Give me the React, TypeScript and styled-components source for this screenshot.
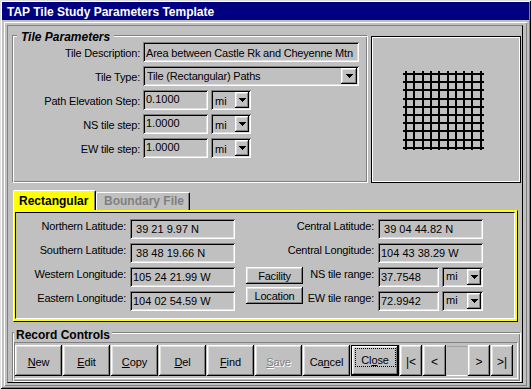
import React from "react";
import styled, { createGlobalStyle } from "styled-components";

const GlobalStyle = createGlobalStyle`
  html, body { margin: 0; padding: 0; background: #c0c0c0; }
  body { font-family: "Liberation Sans", Arial, sans-serif; font-size: 11px; color: #000; }
  *, *::before, *::after { box-sizing: border-box; }
`;

const sunken = `box-shadow: inset 1px 1px #808080, inset -1px -1px #fff, inset 2px 2px #000, inset -2px -2px #dfdfdf;`;
const raised = `box-shadow: inset -1px -1px #000, inset 1px 1px #fff, inset -2px -2px #808080, inset 2px 2px #dfdfdf;`;

const Window = styled.div`
  width: 531px;
  height: 389px;
  background: #c0c0c0;
  padding: 2px;
  display: flex;
  flex-direction: column;
  overflow: hidden;
  box-shadow: inset 1px 1px #dfdfdf, inset -1px -1px #000, inset 2px 2px #fff, inset -2px -2px #808080;
`;

const TitleBar = styled.div`
  flex: none;
  height: 18px;
  background: #000080;
  color: #fff;
  font-weight: bold;
  font-size: 12px;
  line-height: 16px;
  padding: 2px 0 0 5px;
  white-space: nowrap;
`;

const Client = styled.div`
  flex: 1;
  margin: 2px 2px 1px 2px;
  padding: 3px 4px 3px 3px;
  display: flex;
  flex-direction: column;
  box-shadow: inset 1px 1px #fff, inset -1px -1px #808080;
`;

const Frame = styled.div`
  flex: 1;
  border: 1px solid;
  border-color: #808080 #000 #000 #808080;
  display: flex;
  flex-direction: column;
`;

const TopRow = styled.div`
  display: flex;
  gap: 3px;
  height: 148px;
  margin: 9px 1px 0 4px;
`;

const Group = styled.div<{ $w: number; $h?: number; $pad: string }>`
  position: relative;
  width: ${(p) => p.$w}px;
  ${(p) => (p.$h ? `height: ${p.$h}px;` : "")}
  padding: ${(p) => p.$pad};
  border: 1px solid;
  border-color: #808080 #fff #fff #808080;
  box-shadow: inset 1px 1px #fff, inset -1px -1px #808080;
`;

const Legend = styled.span<{ $left: number; $italic?: boolean; $pad: string }>`
  position: absolute;
  top: ${(p) => (p.$italic ? -6 : -5)}px;
  left: ${(p) => p.$left}px;
  padding: ${(p) => p.$pad};
  background: #c0c0c0;
  font-weight: bold;
  font-style: ${(p) => (p.$italic ? "italic" : "normal")};
  font-size: 12px;
  line-height: 14px;
  white-space: nowrap;
`;

const FormGrid = styled.div`
  display: grid;
  grid-template-columns: 127px 1fr;
  grid-auto-rows: 20px;
  column-gap: 3px;
  row-gap: 4px;
`;

const Label = styled.div`
  height: 20px;
  text-align: right;
  line-height: 22px;
  letter-spacing: -0.2px;
  white-space: nowrap;
`;

const TextBox = styled.div<{ $w: number; $lh: number; $tight?: boolean }>`
  width: ${(p) => p.$w}px;
  height: 20px;
  background: #c0c0c0;
  padding-left: 3px;
  line-height: ${(p) => p.$lh}px;
  white-space: pre;
  overflow: hidden;
  letter-spacing: ${(p) => (p.$tight ? "-0.2px" : "0")};
  ${sunken}
`;

const Pair = styled.div`
  display: flex;
  gap: 3px;
`;

const Combo = styled.div<{ $w: number }>`
  width: ${(p) => p.$w}px;
  height: 20px;
  display: flex;
  align-items: flex-start;
  padding: 2px;
  ${sunken}
`;

const ComboText = styled.div<{ $lh: number; $tight?: boolean }>`
  flex: 1;
  height: 16px;
  padding-left: 2px;
  margin-top: -2px;
  line-height: ${(p) => p.$lh}px;
  white-space: nowrap;
  overflow: hidden;
  letter-spacing: ${(p) => (p.$tight ? "-0.2px" : "0")};
`;

const DropButton = styled.div<{ $w: number }>`
  flex: none;
  width: ${(p) => p.$w}px;
  height: 16px;
  display: flex;
  align-items: center;
  justify-content: center;
  background: #c0c0c0;
  ${raised}
`;

const Arrow = () => (
  <svg width="7" height="4" viewBox="0 0 7 4" shapeRendering="crispEdges">
    <rect x="0" y="0" width="7" height="1" fill="#000" />
    <rect x="1" y="1" width="5" height="1" fill="#000" />
    <rect x="2" y="2" width="3" height="1" fill="#000" />
    <rect x="3" y="3" width="1" height="1" fill="#000" />
  </svg>
);

const Preview = styled.div`
  flex: 1;
  margin-top: 1px;
  border: 1px solid #000;
  box-shadow: inset 0 0 0 1px #fff;
  display: flex;
  align-items: center;
  justify-content: center;
  padding: 2px 5px 0 0;
`;

const TileGrid = () => {
  const xs = Array.from({ length: 10 }, (_, i) => 2 + Math.round(i * 8.3));
  const ys = Array.from({ length: 10 }, (_, i) => 2 + Math.round(i * 8.2));
  return (
    <svg width="81" height="79" viewBox="0 0 81 79" shapeRendering="crispEdges">
      {xs.map((x) => (
        <rect key={"v" + x} x={x} y={0} width={2} height={79} fill="#000" />
      ))}
      {ys.map((y) => (
        <rect key={"h" + y} x={0} y={y} width={81} height={2} fill="#000" />
      ))}
    </svg>
  );
};

const TabArea = styled.div`
  width: 505px;
  margin: 7px 0 0 5px;
  display: flex;
  flex-direction: column;
`;

const TabStrip = styled.div`
  display: flex;
  align-items: flex-end;
  height: 20px;
`;

const Tab = styled.div<{ $active?: boolean; $w: number }>`
  width: ${(p) => p.$w}px;
  height: ${(p) => (p.$active ? 20 : 18)}px;
  background: ${(p) => (p.$active ? "#ffff00" : "#c0c0c0")};
  color: ${(p) => (p.$active ? "#000" : "#808080")};
  font-weight: bold;
  font-size: 12px;
  line-height: ${(p) => (p.$active ? 20 : 16)}px;
  padding-left: ${(p) => (p.$active ? 5 : 7)}px;
  border-top: 1px solid #fff;
  border-left: 1px solid #fff;
  border-right: 1px solid #000;
  border-top-left-radius: 2px;
  border-top-right-radius: 2px;
  box-shadow: inset -1px 0 #808080;
  white-space: nowrap;
`;

const TabPanel = styled.div`
  height: 112px;
  border: 1px solid;
  border-color: #ffff00 #000 #000 #fff;
  background: #ffff00;
  padding: 1px 2px 2px 1px;
`;

const TabInner = styled.div`
  height: 100%;
  background: #c0c0c0;
  border: 1px solid;
  border-color: #000 #fff #fff #000;
  padding-top: 6px;
`;

const RectGrid = styled.div`
  display: grid;
  grid-template-columns: 114px 105px 11px 57px 75px 105px;
  grid-template-rows: repeat(4, 20px);
  row-gap: 4px;
`;

const RLabel = styled.div<{ $col: string; $row: number }>`
  grid-column: ${(p) => p.$col};
  grid-row: ${(p) => p.$row};
  text-align: right;
  padding-right: 4px;
  line-height: 14px;
  letter-spacing: -0.2px;
  white-space: nowrap;
`;

const Cell = styled.div<{ $col: number; $row: number }>`
  grid-column: ${(p) => p.$col};
  grid-row: ${(p) => p.$row};
`;

const ButtonStack = styled.div`
  grid-column: 4;
  grid-row: 3 / 5;
  display: flex;
  flex-direction: column;
  gap: 3px;
`;

const SmallButton = styled.button`
  width: 57px;
  height: 17px;
  border: none;
  padding: 0;
  background: #c0c0c0;
  font-family: inherit;
  font-size: 11px;
  letter-spacing: -0.2px;
  color: #000;
  ${raised}
`;

const RecordGroup = styled(Group)`
  margin: 10px 0 0 4px;
`;

const ButtonBar = styled.div`
  height: 37px;
  display: flex;
  gap: 1px;
  padding: 2px 0 0 0;
  border: 1px solid;
  border-color: #808080 #fff #fff #808080;
`;

const Btn = styled.button<{ $w: number; $default?: boolean; $disabled?: boolean; $nav?: boolean }>`
  flex: none;
  width: ${(p) => p.$w}px;
  height: 31px;
  padding: 2px 0 0 0;
  display: flex;
  align-items: ${(p) => (p.$default ? "flex-start" : "center")};
  justify-content: center;
  background: #c0c0c0;
  font-family: inherit;
  font-size: ${(p) => (p.$nav ? 12 : 11)}px;
  color: ${(p) => (p.$disabled ? "#808080" : "#000")};
  text-shadow: ${(p) => (p.$disabled ? "1px 1px #fff" : "none")};
  border: ${(p) => (p.$default ? "1px solid #000" : "none")};
  letter-spacing: -0.1px;
  ${raised}
`;

const FocusRect = styled.span`
  display: block;
  width: 41px;
  height: 19px;
  border: 1px dotted #000;
  padding-top: 5px;
  text-align: center;
  line-height: 13px;
`;

const NavBlank = styled.div`
  flex: none;
  width: 20px;
  height: 30px;
  margin-top: 1px;
  border-top: 1px solid #a0a0a0;
  border-bottom: 1px solid #fff;
`;

type RowDef = { label: string; value: string; unit?: boolean };

const tileRows: RowDef[] = [
  { label: "Path Elevation Step:", value: "0.1000", unit: true },
  { label: "NS tile step:", value: "1.0000", unit: true },
  { label: "EW tile step:", value: "1.0000", unit: true },
];

const leftRect: RowDef[] = [
  { label: "Northern Latitude:", value: " 39 21 9.97 N" },
  { label: "Southern Latitude:", value: " 38 48 19.66 N" },
  { label: "Western Longitude:", value: "105 24 21.99 W" },
  { label: "Eastern Longitude:", value: "104 02 54.59 W" },
];

const rightRect: RowDef[] = [
  { label: "Central Latitude:", value: " 39 04 44.82 N" },
  { label: "Central Longitude:", value: "104 43 38.29 W" },
  { label: "NS tile range:", value: "37.7548", unit: true },
  { label: "EW tile range:", value: "72.9942", unit: true },
];

const UnitCombo = ({ w, lh }: { w: number; lh: number }) => (
  <Combo $w={w}>
    <ComboText $lh={lh}>mi</ComboText>
    <DropButton $w={14}>
      <Arrow />
    </DropButton>
  </Combo>
);

export default function App() {
  return (
    <>
      <GlobalStyle />
      <Window>
        <TitleBar>TAP Tile Study Parameters Template</TitleBar>
        <Client>
          <Frame>
            <TopRow>
              <Group $w={356} $pad="6px 0 0 0">
                <Legend $left={4} $italic $pad="0 4px">
                  Tile Parameters
                </Legend>
                <FormGrid>
                  <Label>Tile Description:</Label>
                  <TextBox $w={216} $lh={22} $tight>
                    Area between Castle Rk and Cheyenne Mtn
                  </TextBox>
                  <Label>Tile Type:</Label>
                  <Combo $w={216}>
                    <ComboText $lh={20} $tight>
                      Tile (Rectangular) Paths
                    </ComboText>
                    <DropButton $w={16}>
                      <Arrow />
                    </DropButton>
                  </Combo>
                  {tileRows.map((r) => (
                    <React.Fragment key={r.label}>
                      <Label>{r.label}</Label>
                      <Pair>
                        <TextBox $w={65} $lh={19}>
                          {r.value}
                        </TextBox>
                        <UnitCombo w={40} lh={22} />
                      </Pair>
                    </React.Fragment>
                  ))}
                </FormGrid>
              </Group>
              <Preview>
                <TileGrid />
              </Preview>
            </TopRow>

            <TabArea>
              <TabStrip>
                <Tab $active $w={83}>
                  Rectangular
                </Tab>
                <Tab $w={94}>Boundary File</Tab>
              </TabStrip>
              <TabPanel>
                <TabInner>
                  <RectGrid>
                    {leftRect.map((r, i) => (
                      <React.Fragment key={r.label}>
                        <RLabel $col="1" $row={i + 1}>
                          {r.label}
                        </RLabel>
                        <Cell $col={2} $row={i + 1}>
                          <TextBox $w={105} $lh={20}>
                            {r.value}
                          </TextBox>
                        </Cell>
                      </React.Fragment>
                    ))}
                    <ButtonStack>
                      <SmallButton>Facility</SmallButton>
                      <SmallButton>Location</SmallButton>
                    </ButtonStack>
                    {rightRect.map((r, i) => (
                      <React.Fragment key={r.label}>
                        <RLabel $col={i < 2 ? "3 / 6" : "5"} $row={i + 1}>
                          {r.label}
                        </RLabel>
                        <Cell $col={6} $row={i + 1}>
                          {r.unit ? (
                            <Pair>
                              <TextBox $w={61} $lh={20}>
                                {r.value}
                              </TextBox>
                              <UnitCombo w={41} lh={19} />
                            </Pair>
                          ) : (
                            <TextBox $w={105} $lh={20}>
                              {r.value}
                            </TextBox>
                          )}
                        </Cell>
                      </React.Fragment>
                    ))}
                  </RectGrid>
                </TabInner>
              </TabPanel>
            </TabArea>

            <RecordGroup $w={509} $h={50} $pad="9px 2px 2px 1px">
              <Legend $left={1} $pad="0 2px">
                Record Controls
              </Legend>
              <ButtonBar>
                <Btn $w={47}>
                  <span><u>N</u>ew</span>
                </Btn>
                <Btn $w={47}>
                  <span><u>E</u>dit</span>
                </Btn>
                <Btn $w={47}>
                  <span><u>C</u>opy</span>
                </Btn>
                <Btn $w={47}>
                  <span><u>D</u>el</span>
                </Btn>
                <Btn $w={47}>
                  <span><u>F</u>ind</span>
                </Btn>
                <Btn $w={47} $disabled>
                  <span><u>S</u>ave</span>
                </Btn>
                <Btn $w={47}>
                  <span>Ca<u>n</u>cel</span>
                </Btn>
                <Btn $w={48} $default>
                  <FocusRect>
                    Cl<u>o</u>se
                  </FocusRect>
                </Btn>
                <Btn $w={22} $nav>|&lt;</Btn>
                <Btn $w={23} $nav>&lt;</Btn>
                <NavBlank />
                <Btn $w={22} $nav>&gt;</Btn>
                <Btn $w={22} $nav>&gt;|</Btn>
              </ButtonBar>
            </RecordGroup>
          </Frame>
        </Client>
      </Window>
    </>
  );
}
